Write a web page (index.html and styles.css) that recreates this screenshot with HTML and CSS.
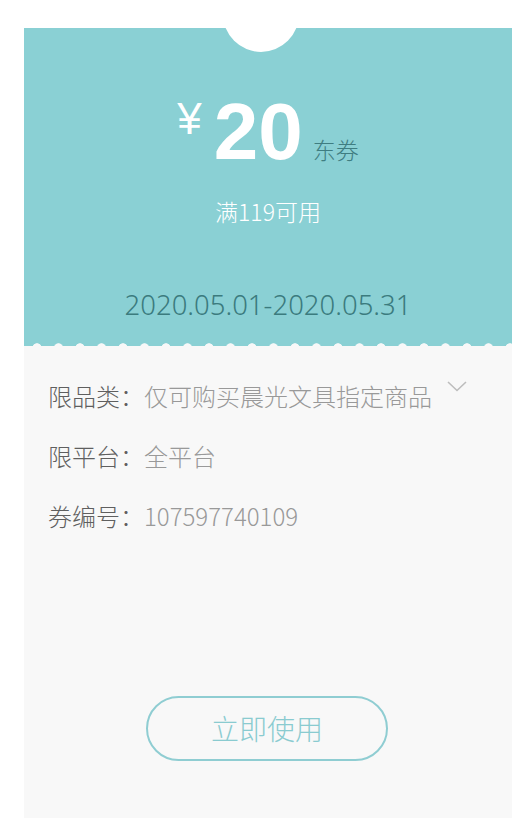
FILE: index.html
```html
<!DOCTYPE html>
<html lang="zh-CN">
<head>
<meta charset="UTF-8">
<meta name="viewport" content="width=device-width, initial-scale=1.0">
<title>东券详情</title>
<link rel="stylesheet" href="styles.css">
</head>
<body>
<div class="coupon">
    <section class="coupon-top">
        <div class="amount">
            <span class="yen">¥</span>
            <span class="value">20</span>
            <span class="unit">东券</span>
        </div>
        <p class="limit">满119可用</p>
        <p class="date">2020.05.01-2020.05.31</p>
    </section>
    <section class="coupon-info">
        <div class="row">
            <span class="label">限品类：</span>
            <span class="text">仅可购买晨光文具指定商品</span>
            <svg class="arrow" width="20" height="11" viewBox="0 0 20 11">
                <polyline points="1,1 10,9.5 19,1" fill="none" stroke="#bdbdbd" stroke-width="1.6"/>
            </svg>
        </div>
        <div class="row">
            <span class="label">限平台：</span>
            <span class="text">全平台</span>
        </div>
        <div class="row">
            <span class="label">券编号：</span>
            <span class="text">107597740109</span>
        </div>
        <button class="use-btn">立即使用</button>
    </section>
</div>
</body>
</html>
```

FILE: styles.css
```css
body {
    margin: 0;
    padding: 28px 16px 0 24px;
    background: #fff;
    font-family: "Noto Sans", "Noto Sans CJK SC", sans-serif;
    overflow: hidden;
}
.coupon {
    background: #f8f8f8;
}
.coupon-top {
    position: relative;
    background: #8ad0d4;
    padding: 64px 0 27px;
    text-align: center;
    overflow: hidden;
}
/* half circle cut at the top */
.coupon-top::before {
    content: "";
    position: absolute;
    left: 199px;
    top: -52px;
    width: 76px;
    height: 76px;
    border-radius: 50%;
    background: #fff;
}
/* scalloped bottom edge */
.coupon-top::after {
    content: "";
    position: absolute;
    left: 0;
    right: 0;
    bottom: 0;
    height: 3px;
    background: radial-gradient(circle at 50% 5px, #f8f8f8 4.4px, transparent 5px) repeat-x;
    background-size: 21.5px 3px;
    background-position: 2.25px 0;
}
.amount {
    display: flex;
    justify-content: center;
    align-items: baseline;
    line-height: 1;
}
.yen {
    align-self: flex-start;
    margin-top: 5px;
    font-family: "Liberation Sans", sans-serif;
    font-size: 44px;
    color: #fff;
}
.value {
    margin-left: 12px;
    font-family: "Liberation Sans", sans-serif;
    font-weight: bold;
    font-size: 80px;
    color: #fff;
}
.unit {
    margin-left: 10px;
    font-family: "Noto Sans CJK SC", sans-serif;
    font-weight: 300;
    font-size: 23px;
    color: #3f7d81;
}
.limit {
    margin: 28px 0 0;
    font-family: "Noto Sans CJK SC", sans-serif;
    font-weight: 300;
    font-size: 23px;
    line-height: 1;
    color: #fff;
}
.date {
    margin: 68px 0 0;
    font-size: 27.5px;
    font-weight: 300;
    line-height: 1;
    color: #3b7b7e;
}
.coupon-info {
    padding: 38px 24px 57px;
    display: flex;
    flex-direction: column;
    gap: 36px;
}
.row {
    display: flex;
    align-items: center;
    font-family: "Noto Sans CJK SC", sans-serif;
    font-weight: 300;
    font-size: 24px;
    line-height: 1;
}
.label {
    color: #5f5f5f;
}
.text {
    color: #999;
}
.arrow {
    margin-left: 15px;
    align-self: flex-start;
    margin-top: -3px;
}
.use-btn {
    align-self: center;
    margin-top: 132px;
    margin-left: -2px;
    width: 242px;
    height: 65px;
    border: 2px solid #8fcdd2;
    border-radius: 33px;
    background: transparent;
    font-family: "Noto Sans CJK SC", sans-serif;
    font-weight: 300;
    font-size: 28px;
    color: #8acbd0;
    padding: 0;
}
```
